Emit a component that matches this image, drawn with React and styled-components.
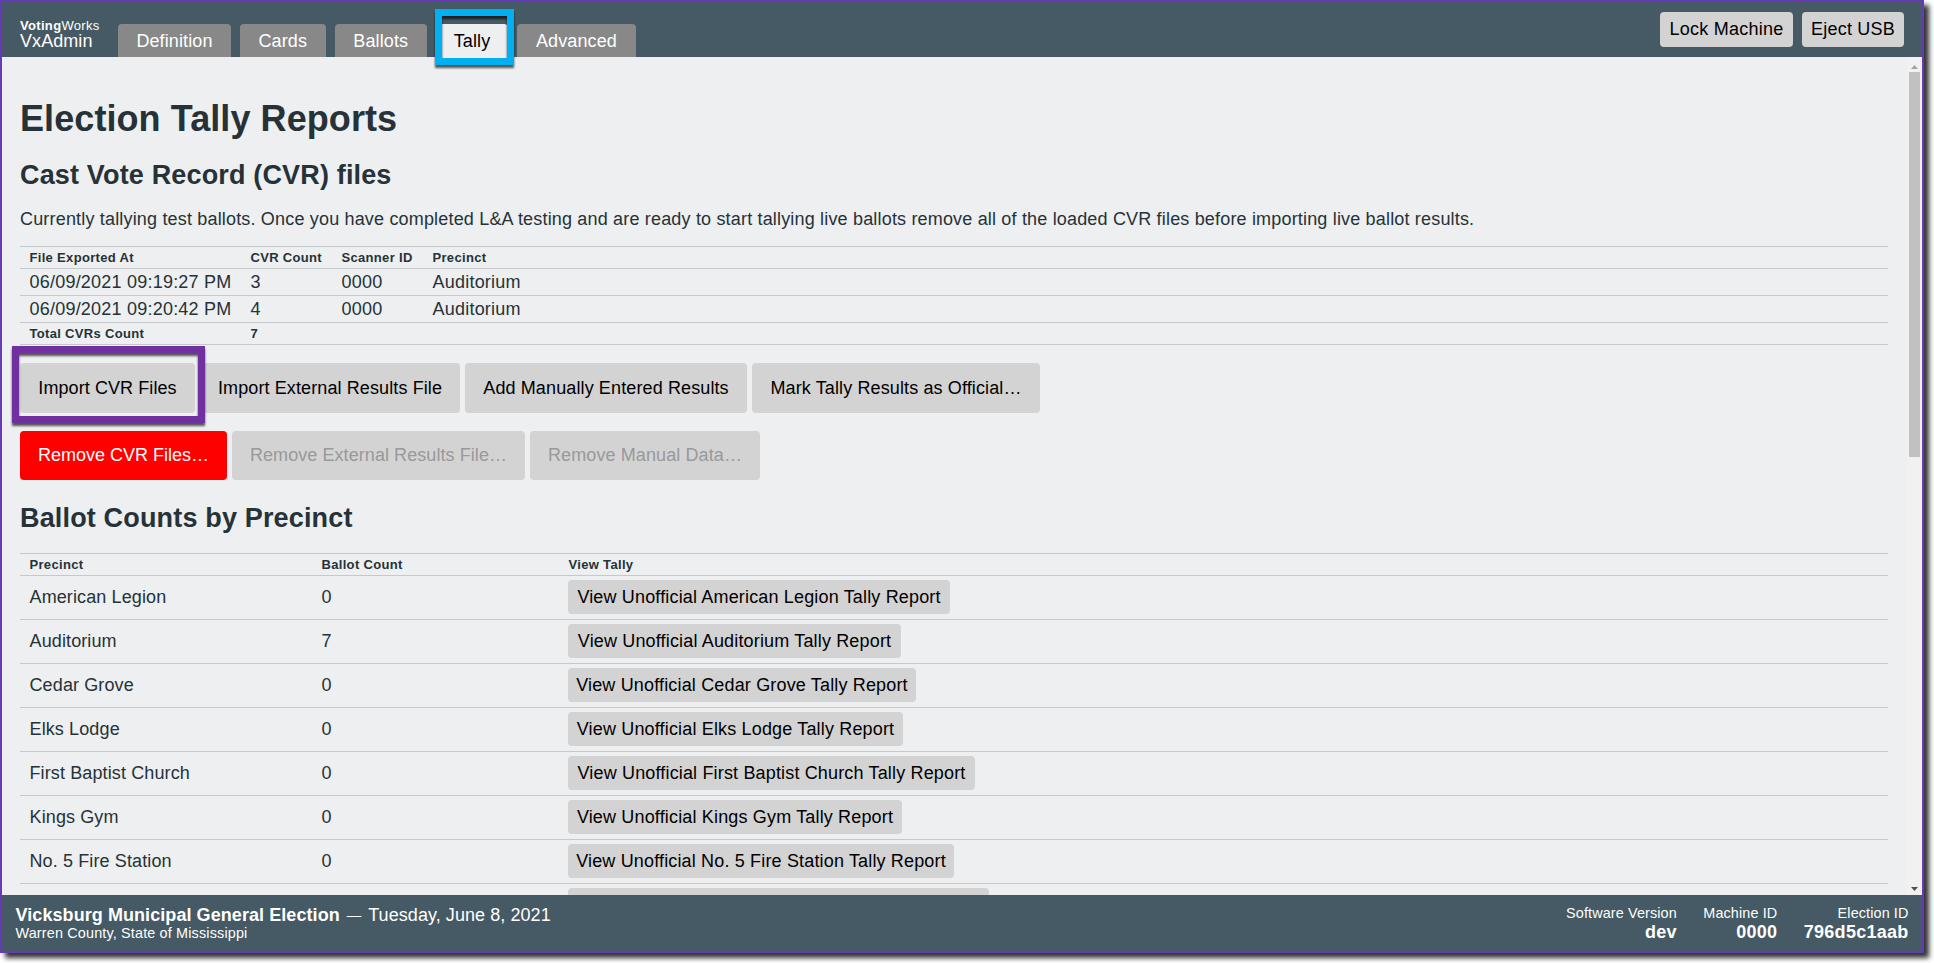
import React from 'react';
import styled, { createGlobalStyle } from 'styled-components';

const GlobalStyle = createGlobalStyle`
  *, *::before, *::after { box-sizing: border-box; }
  html, body { margin: 0; height: 100%; overflow: hidden; background: #fff; }
  body { font-family: "Liberation Sans", Helvetica, Arial, sans-serif; font-size: 18px; color: #263238; }
  h1, h2, p { margin: 0; }
`;

const Window = styled.div`
  width: 1924px;
  height: 953px;
  border: 2px solid #673ab7;
  box-shadow: 5px 5px 5px #333;
  display: flex;
  flex-direction: column;
  background: #edeff0;
`;

const Header = styled.header`
  flex: 0 0 55px;
  display: flex;
  align-items: flex-end;
  padding: 0 18px;
  background: #455a64;
  color: #fff;
`;

const Brand = styled.div`
  width: 98px;
  height: 55px;
  padding-top: 17px;
  white-space: nowrap;
`;

const Company = styled.div`
  font-size: 13px;
  line-height: 14px;
  letter-spacing: 0.32px;
`;

const Product = styled.div`
  margin-top: -1px;
  line-height: 18px;
  letter-spacing: 0.07px;
`;

const Tabs = styled.nav`
  display: flex;
  gap: 9px;
`;

const Tab = styled.div`
  position: relative;
  width: ${(p) => p.$w}px;
  height: 33px;
  line-height: 34px;
  text-align: center;
  letter-spacing: 0.12px;
  border-radius: 4px 4px 0 0;
  background: ${(p) => (p.$active ? '#edeff0' : '#888')};
  color: ${(p) => (p.$active ? '#000' : '#fff')};
`;

const Highlight = styled.span`
  position: absolute;
  top: ${(p) => p.$top}px;
  left: ${(p) => p.$left}px;
  width: ${(p) => p.$w}px;
  height: ${(p) => p.$h}px;
  border: 7px solid ${(p) => p.$color};
  filter: drop-shadow(0 3px 1px rgba(0, 0, 0, 0.65));
  z-index: 2;
`;

const HeaderActions = styled.div`
  margin-left: auto;
  align-self: flex-start;
  padding-top: 10px;
  display: flex;
  gap: 9px;
`;

const Button = styled.button`
  position: relative;
  flex: none;
  width: ${(p) => p.$w}px;
  height: ${(p) => p.$h || 34}px;
  padding: 0 0 ${(p) => (p.$h % 2 ? 1 : 0)}px;
  border: 0;
  border-radius: 4px;
  font: inherit;
  letter-spacing: ${(p) => p.$track || 0}px;
  white-space: nowrap;
  background: ${(p) => (p.$danger ? '#f00' : '#d3d3d3')};
  color: ${(p) => (p.$danger ? '#fff' : p.disabled ? '#999' : '#000')};
`;

const Body = styled.div`
  flex: 1;
  min-height: 0;
  display: flex;
`;

const Main = styled.main`
  flex: 1;
  min-width: 0;
  overflow: hidden;
  padding: 37px 19px 0 18px;
`;

const Title = styled.h1`
  font-size: 36px;
  line-height: 50px;
  letter-spacing: 0.08px;
`;

const Heading = styled.h2`
  font-size: 27px;
  line-height: 36px;
  margin-top: ${(p) => p.$mt}px;
  letter-spacing: 0.16px;
`;

const Paragraph = styled.p`
  margin-top: 14px;
  line-height: 24px;
  white-space: nowrap;
  letter-spacing: 0.175px;
`;

const Table = styled.div`
  margin-top: ${(p) => p.$mt}px;
  border-bottom: 1px solid #c5c9cc;
`;

const Row = styled.div`
  display: grid;
  grid-template-columns: ${(p) => p.$cols};
  align-items: center;
  height: ${(p) => p.$h}px;
  border-top: 1px solid #c5c9cc;
  padding-left: 9px;
  padding-bottom: ${(p) => (p.$h === 44 ? 1 : 0)}px;
  white-space: nowrap;
  font-size: ${(p) => (p.$head ? 13 : 18)}px;
  font-weight: ${(p) => (p.$head ? 700 : 400)};
  letter-spacing: ${(p) => (p.$head ? 0.32 : p.$h === 44 ? 0.12 : 0.22)}px;
`;

const Cell = styled.span`
  line-height: 20px;
  padding-left: 0.5px;
`;

const ButtonCell = styled.div`
  display: flex;
`;

const ButtonRow = styled.div`
  display: flex;
  gap: 5px;
  margin-top: 18px;
`;

const Scrollbar = styled.div`
  width: 15px;
  display: flex;
  flex-direction: column;
  align-items: center;
  background: #f1f1f1;
`;

const Thumb = styled.div`
  width: 11px;
  height: 385px;
  background: #c1c1c1;
`;

const ArrowUp = styled.div`
  height: 15px;
  padding-top: 6px;
  line-height: 0;
`;

const ArrowDown = styled.div`
  margin-top: auto;
  height: 10px;
  line-height: 0;
`;

const Footer = styled.footer`
  flex: 0 0 56px;
  display: flex;
  justify-content: space-between;
  padding: 9px 13.5px 0 13.5px;
  background: #455a64;
  color: #fff;
  white-space: nowrap;
`;

const FooterTitle = styled.div`
  padding-top: 1px;
  line-height: 21px;
  letter-spacing: 0.07px;
`;

const Dash = styled.span`
  position: relative;
  top: -1px;
  font-size: 14.5px;
  line-height: 1;
  margin: 0 2px;
`;

const Place = styled.div`
  margin-top: -1px;
  font-size: 14.4px;
  line-height: 17px;
  letter-spacing: 0.16px;
`;

const Details = styled.div`
  display: flex;
  gap: 26.5px;
  text-align: right;
`;

const DetailLabel = styled.div`
  font-size: 14.4px;
  line-height: 18px;
  letter-spacing: 0.12px;
`;

const DetailValue = styled.div`
  font-weight: 700;
  line-height: 20px;
  letter-spacing: 0.26px;
`;

const cvrCols = '221px 91px 91px 1fr';
const precinctCols = '292px 247px 1fr';

const cvrFiles = [
  ['06/09/2021 09:19:27 PM', '3', '0000', 'Auditorium'],
  ['06/09/2021 09:20:42 PM', '4', '0000', 'Auditorium'],
];

const precincts = [
  ['American Legion', 0, 382],
  ['Auditorium', 7, 333],
  ['Cedar Grove', 0, 348],
  ['Elks Lodge', 0, 335],
  ['First Baptist Church', 0, 407],
  ['Kings Gym', 0, 334],
  ['No. 5 Fire Station', 0, 386],
];

export default function App() {
  return (
    <>
      <GlobalStyle />
      <Window>
        <Header>
          <Brand>
            <Company><b>Voting</b>Works</Company>
            <Product>VxAdmin</Product>
          </Brand>
          <Tabs>
            <Tab $w={113}>Definition</Tab>
            <Tab $w={85.6}>Cards</Tab>
            <Tab $w={92.4}>Ballots</Tab>
            <Tab $w={72} $active>
              Tally
              <Highlight $color="#00b0f0" $top={-15} $left={-1} $w={79} $h={56} />
            </Tab>
            <Tab $w={119}>Advanced</Tab>
          </Tabs>
          <HeaderActions>
            <Button $w={133} $h={35} $track={0.25}>Lock Machine</Button>
            <Button $w={102} $h={35} $track={0.2}>Eject USB</Button>
          </HeaderActions>
        </Header>
        <Body>
          <Main>
            <Title>Election Tally Reports</Title>
            <Heading $mt={13}>Cast Vote Record (CVR) files</Heading>
            <Paragraph>
              Currently tallying test ballots. Once you have completed L&amp;A testing and are ready to start tallying live ballots remove all of the loaded CVR files before importing live ballot results.
            </Paragraph>
            <Table $mt={15}>
              <Row $head $h={22} $cols={cvrCols}>
                <Cell>File Exported At</Cell>
                <Cell>CVR Count</Cell>
                <Cell>Scanner ID</Cell>
                <Cell>Precinct</Cell>
              </Row>
              {cvrFiles.map((cells) => (
                <Row key={cells[0]} $h={27} $cols={cvrCols}>
                  {cells.map((c, i) => <Cell key={i}>{c}</Cell>)}
                </Row>
              ))}
              <Row $head $h={22} $cols={cvrCols}>
                <Cell>Total CVRs Count</Cell>
                <Cell>7</Cell>
              </Row>
            </Table>
            <ButtonRow>
              <Button $w={175} $h={50} $track={0.08}>
                Import CVR Files
                <Highlight $color="#7030a0" $top={-17} $left={-8} $w={193} $h={77} />
              </Button>
              <Button $w={260} $h={50} $track={0.11}>Import External Results File</Button>
              <Button $w={282} $h={50} $track={0.12}>Add Manually Entered Results</Button>
              <Button $w={288} $h={50} $track={0.12}>Mark Tally Results as Official…</Button>
            </ButtonRow>
            <ButtonRow>
              <Button $w={207} $h={49} $danger>Remove CVR Files…</Button>
              <Button $w={293} $h={49} $track={0.07} disabled>Remove External Results File…</Button>
              <Button $w={230} $h={49} $track={0.1} disabled>Remove Manual Data…</Button>
            </ButtonRow>
            <Heading $mt={20}>Ballot Counts by Precinct</Heading>
            <Table $mt={17}>
              <Row $head $h={22} $cols={precinctCols}>
                <Cell>Precinct</Cell>
                <Cell>Ballot Count</Cell>
                <Cell>View Tally</Cell>
              </Row>
              {precincts.map(([name, count, w]) => (
                <Row key={name} $h={44} $cols={precinctCols}>
                  <Cell>{name}</Cell>
                  <Cell>{count}</Cell>
                  <ButtonCell>
                    <Button $w={w} $track={0.16}>View Unofficial {name} Tally Report</Button>
                  </ButtonCell>
                </Row>
              ))}
              <Row $h={44} $cols={precinctCols}>
                <Cell />
                <Cell />
                <ButtonCell><Button $w={421} /></ButtonCell>
              </Row>
            </Table>
          </Main>
          <Scrollbar>
            <ArrowUp>
              <svg width="7" height="4"><path d="M3.5 0L7 4H0z" fill="#a3a3a3" /></svg>
            </ArrowUp>
            <Thumb />
            <ArrowDown>
              <svg width="7" height="4"><path d="M0 0h7L3.5 4z" fill="#505050" /></svg>
            </ArrowDown>
          </Scrollbar>
        </Body>
        <Footer>
          <div>
            <FooterTitle><b>Vicksburg Municipal General Election</b> <Dash>—</Dash> Tuesday, June 8, 2021</FooterTitle>
            <Place>Warren County, State of Mississippi</Place>
          </div>
          <Details>
            <div><DetailLabel>Software Version</DetailLabel><DetailValue>dev</DetailValue></div>
            <div><DetailLabel>Machine ID</DetailLabel><DetailValue>0000</DetailValue></div>
            <div><DetailLabel>Election ID</DetailLabel><DetailValue>796d5c1aab</DetailValue></div>
          </Details>
        </Footer>
      </Window>
    </>
  );
}
